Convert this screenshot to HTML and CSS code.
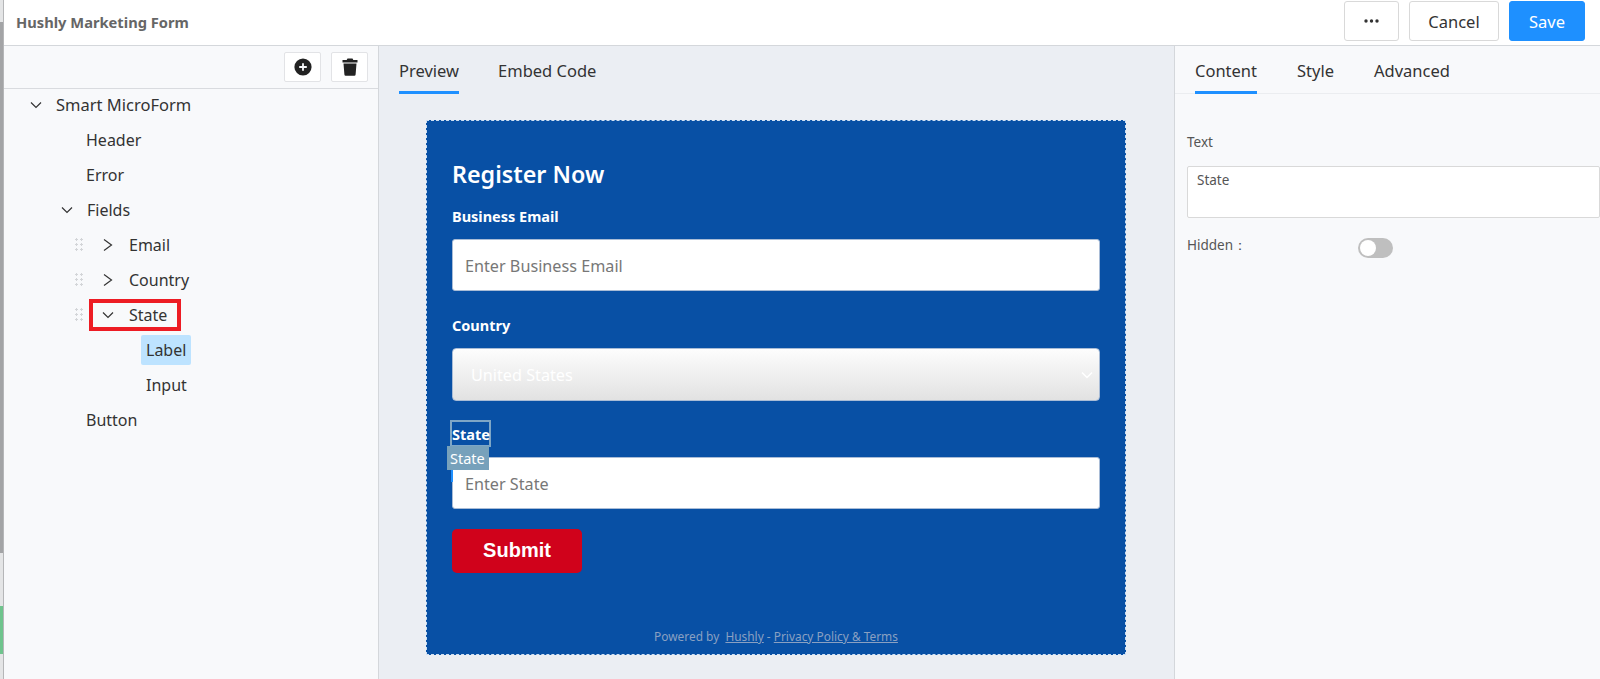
FILE: index.html
```html
<!DOCTYPE html>
<html lang="en">
  <head>
    <meta charset="UTF-8" />
    <title>Hushly Marketing Form</title>
    <link rel="stylesheet" href="styles.css">
  </head>
  <body>
    <div class="edge"><div class="edge-thumb"></div><div class="edge-green"></div></div>
    <div class="app">
      <header class="topbar">
        <div class="title">Hushly Marketing Form</div>
        <div class="actions">
          <button class="btn btn-more">
            <svg width="15" height="4" viewBox="0 0 15 4"><circle cx="2" cy="2" r="1.7"/><circle cx="7.500" cy="2" r="1.700"/><circle cx="13" cy="2" r="1.700"/></svg>
          </button>
          <button class="btn btn-cancel">Cancel</button>
          <button class="btn btn-save">Save</button>
        </div>
      </header>
      <div class="main">
        <aside class="left">
          <div class="tree-tools">
            <button class="tool">
              <svg width="18" height="18" viewBox="0 0 18 18"><circle cx="9" cy="9" r="8.600" fill="#222"/><path d="M9 5.200v7.600M5.200 9h7.600" stroke="#f8f9fb" stroke-width="1.800"/></svg>
            </button>
            <button class="tool">
              <svg width="16" height="18" viewBox="0 0 16 18"><path d="M5.500 0.500h5l0.800 1.500H15.500v2.500H0.500V2h4.200zM1.500 5.500h13l-0.900 11a1.300 1.300 0 0 1-1.300 1.200H3.700a1.300 1.300 0 0 1-1.300-1.200z" fill="#222"/></svg>
            </button>
          </div>
          <ul class="tree">
            <li class="row lvl-0"><svg class="arrow" viewBox="0 0 12 12"><path d="M1 3.500l5 5 5-5"/></svg><span>Smart MicroForm</span></li>
            <li class="row lvl-1"><span>Header</span></li>
            <li class="row lvl-1"><span>Error</span></li>
            <li class="row lvl-1b"><svg class="arrow" viewBox="0 0 12 12"><path d="M1 3.500l5 5 5-5"/></svg><span>Fields</span></li>
            <li class="row lvl-2"><i class="grip"></i><svg class="arrow" viewBox="0 0 12 12"><path d="M2 0.500l7.500 5.500-7.500 5.500"/></svg><span>Email</span></li>
            <li class="row lvl-2"><i class="grip"></i><svg class="arrow" viewBox="0 0 12 12"><path d="M2 0.500l7.500 5.500-7.500 5.500"/></svg><span>Country</span></li>
            <li class="row lvl-2"><i class="grip"></i><div class="marked"><svg class="arrow" viewBox="0 0 12 12"><path d="M1 3.500l5 5 5-5"/></svg><span>State</span></div></li>
            <li class="row lvl-3"><span class="selected">Label</span></li>
            <li class="row lvl-3"><span class="plain">Input</span></li>
            <li class="row lvl-1"><span>Button</span></li>
          </ul>
        </aside>

        <section class="center">
          <nav class="tabs">
            <a class="tab active">Preview</a>
            <a class="tab">Embed Code</a>
          </nav>
          <div class="form">
            <h2 class="form-title">Register Now</h2>
            <label class="field-label first">Business Email</label>
            <div class="input">Enter Business Email</div>
            <label class="field-label">Country</label>
            <div class="select">
              <span>United States</span>
              <svg width="12" height="8" viewBox="0 0 12 8"><path d="M1 1.500l5 5 5-5"/></svg>
            </div>
            <div class="state-wrap">
              <label class="field-label state-label">State</label>
              <span class="state-tag">State</span>
            </div>
            <div class="input">Enter State</div>
            <button class="submit">Submit</button>
            <div class="powered">Powered by &nbsp;<u>Hushly</u> - <u>Privacy Policy &amp; Terms</u></div>
          </div>
        </section>

        <aside class="right">
          <nav class="tabs tabs-right">
            <a class="tab active">Content</a>
            <a class="tab">Style</a>
            <a class="tab">Advanced</a>
          </nav>
          <div class="props">
            <div class="prop-label">Text</div>
            <div class="textarea">State</div>
            <div class="hidden-row">
              <span class="prop-label">Hidden：</span>
              <span class="toggle"><i></i></span>
            </div>
          </div>
        </aside>
      </div>
    </div>
  </body>
</html>
```

FILE: styles.css
```css
* {
  box-sizing: border-box;
}
html,
body {
  height: 100%;
}
body {
  margin: 0;
  display: flex;
  overflow: hidden;
  font-family: "Noto Sans", "Open Sans", sans-serif;
  color: #333;
  background-color: #fff;
}
.edge {
  width: 4px;
  height: 100%;
  padding-top: 22px;
  background-color: #e4e5e6;
  border-right: 1px solid #b5b6b8;
}
.edge-thumb {
  height: 531px;
  background-color: #a3a4a6;
}
.edge-green {
  height: 48px;
  margin-top: 53px;
  background-color: #6fc48d;
}
.app {
  flex: 1;
  display: flex;
  flex-direction: column;
  min-width: 0;
}

/* top bar */
.topbar {
  height: 46px;
  flex: none;
  display: flex;
  align-items: flex-start;
  justify-content: space-between;
  padding: 1px 15px 0 12px;
  border-bottom: 1px solid #d4d7db;
}
.title {
  margin-top: 11px;
  font-size: 14.700px;
  line-height: 20px;
  font-weight: 700;
  color: #666;
}
.actions {
  display: flex;
  gap: 10px;
}
.btn {
  height: 40px;
  border: 1px solid #d9d9d9;
  border-radius: 3px;
  background-color: #fff;
  font-family: inherit;
  font-size: 16.500px;
  color: #333;
  padding: 0;
}
.btn-more {
  width: 55px;
}
.btn-more svg {
  display: block;
  margin: 0 auto;
  fill: #333;
}
.btn-cancel {
  width: 90px;
}
.btn-save {
  width: 76px;
  border-color: #1e90ff;
  background-color: #1e90ff;
  color: #fff;
}

.main {
  flex: 1;
  display: flex;
  min-height: 0;
}

/* tree */
.left {
  width: 375px;
  flex: none;
  background-color: #f8f9fb;
  border-right: 1px solid #d4d7db;
}
.tree-tools {
  height: 43px;
  display: flex;
  justify-content: flex-end;
  gap: 10px;
  padding: 6px 10px 0 0;
  border-bottom: 1px solid #d9dbdf;
}
.tool {
  width: 37px;
  height: 30px;
  padding: 0;
  display: flex;
  align-items: center;
  justify-content: center;
  background-color: #fff;
  border: 1px solid #e2e3e6;
  border-radius: 2px;
}
.tree {
  list-style: none;
  margin: 0;
  padding: 0;
}
.row {
  height: 35px;
  padding-bottom: 4px;
  display: flex;
  align-items: center;
  font-size: 16px;
  color: #333;
}
.arrow {
  width: 12px;
  height: 12px;
  flex: none;
  fill: none;
  stroke: #333;
  stroke-width: 1.200;
}
.lvl-0 {
  padding-left: 26px;
  font-size: 16.500px;
}
.lvl-0 .arrow {
  margin-right: 14px;
}
.lvl-1 {
  padding-left: 82px;
}
.lvl-1b {
  padding-left: 57px;
}
.lvl-1b .arrow {
  margin-right: 14px;
}
.lvl-2 {
  padding-left: 70px;
}
.lvl-2 > .arrow {
  margin: 0 15px 0 19px;
}
.grip {
  width: 9px;
  height: 15px;
  flex: none;
  background-image: radial-gradient(circle, #d3d5d8 1px, transparent 1.200px);
  background-size: 5px 5px;
}
.marked {
  display: flex;
  align-items: center;
  width: 92px;
  height: 32px;
  margin-left: 6px;
  padding-left: 9px;
  border: 4px solid #ed1c24;
}
.marked .arrow {
  margin-right: 15px;
}
.lvl-3 {
  padding-left: 137px;
}
.selected {
  display: block;
  height: 30px;
  line-height: 30px;
  padding: 0 5px;
  background-color: #bde3ff;
  border-radius: 2px;
}
.plain {
  padding-left: 5px;
}

/* centre */
.center {
  flex: 1;
  background-color: #ebeef3;
  min-width: 0;
}
.tabs {
  display: flex;
  height: 50px;
  gap: 39px;
  padding-left: 20px;
}
.tab {
  height: 48px;
  padding-top: 13px;
  font-size: 16.500px;
  line-height: 24px;
  color: #333;
  border-bottom: 3px solid transparent;
}
.tab.active {
  border-bottom-color: #1e90ff;
}
.form {
  position: relative;
  width: 700px;
  height: 535px;
  margin: 24px 0 0 47px;
  padding: 37px 25px 0;
  background-color: #0850a5;
  border: 1px dashed #cfe0f3;
  color: #fff;
}
.form-title {
  margin: 0;
  font-size: 23.300px;
  line-height: 32px;
  font-weight: 600;
}
.field-label {
  display: block;
  margin-top: 24px;
  margin-bottom: 13px;
  font-size: 14.500px;
  line-height: 20px;
  font-weight: 700;
}
.field-label.first {
  margin-top: 16px;
}
.input {
  height: 52px;
  line-height: 52px;
  padding-left: 12px;
  background-color: #fff;
  border: 1px solid #a9bcd6;
  border-radius: 3px;
  font-size: 16.200px;
  color: #777;
}
.select {
  height: 53px;
  display: flex;
  align-items: center;
  justify-content: space-between;
  padding: 1px 6px 0 18px;
  background: linear-gradient(#fdfdfd, #e2e2e2);
  border: 1px solid #a9bcd6;
  border-radius: 4px;
  font-size: 16.200px;
  color: #fff;
}
.select svg {
  fill: none;
  stroke: #fff;
  stroke-width: 1.500;
}
.state-wrap {
  position: relative;
  margin-top: 19px;
  height: 37px;
}
.state-label {
  width: 41px;
  height: 27px;
  margin: 0 0 0 -2px;
  line-height: 24px;
  border: 2px solid #7ea6c6;
}
.state-tag {
  position: absolute;
  left: -5px;
  top: 26px;
  width: 42px;
  height: 24px;
  padding-left: 3px;
  font-size: 14.500px;
  line-height: 25px;
  background-color: #77a1bb;
  color: #fff;
}
/* blue sliver from the selection handle, sits on the input edge */
.state-tag::after {
  content: "";
  position: absolute;
  left: 4px;
  top: 24px;
  width: 2px;
  height: 12px;
  background-color: #1e90ff;
}
.submit {
  display: block;
  width: 130px;
  height: 44px;
  margin-top: 20px;
  padding: 0 0 2px;
  border: none;
  border-radius: 5px;
  background-color: #d0021b;
  font-family: "Liberation Sans", Arial, sans-serif;
  font-size: 20px;
  font-weight: 700;
  color: #fff;
}
.powered {
  position: absolute;
  left: 0;
  right: 0;
  bottom: 9px;
  text-align: center;
  font-size: 11.900px;
  line-height: 18px;
  color: #8aa0c2;
}

/* right panel */
.right {
  width: 426px;
  flex: none;
  background-color: #f8f9fb;
  border-left: 1px solid #d4d7db;
}
.tabs-right {
  gap: 40px;
  height: 48px;
  border-bottom: 1px solid #ebedf0;
}
.props {
  padding: 38px 0 0 12px;
}
.prop-label {
  font-size: 13.500px;
  line-height: 20px;
  color: #555;
}
.textarea {
  height: 52px;
  margin-top: 14px;
  padding: 3px 9px;
  background-color: #fff;
  border: 1px solid #d9d9d9;
  border-radius: 2px;
  font-size: 13.500px;
  line-height: 20px;
  color: #555;
}
.hidden-row {
  display: flex;
  align-items: center;
  margin-top: 17px;
}
.hidden-row .prop-label {
  width: 171px;
  padding-bottom: 5px;
}
.toggle {
  width: 35px;
  height: 20px;
  padding: 2px;
  border-radius: 10px;
  background-color: #bfbfbf;
}
.toggle i {
  display: block;
  width: 16px;
  height: 16px;
  border-radius: 50%;
  background-color: #fff;
}
```
